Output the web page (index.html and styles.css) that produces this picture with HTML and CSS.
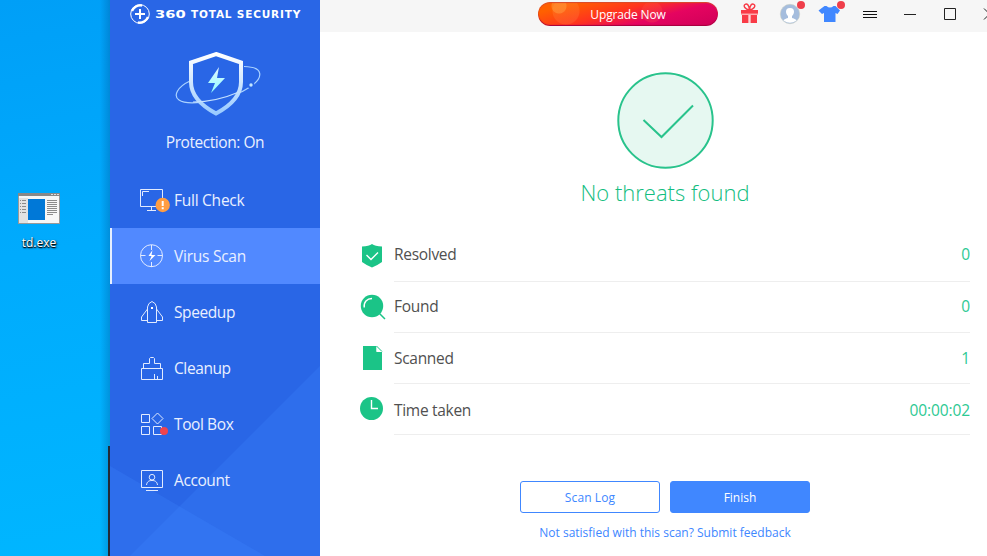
FILE: index.html
```html
<!DOCTYPE html>
<html lang="en">
<head>
<meta charset="utf-8">
<title>360 Total Security</title>
<link rel="stylesheet" href="styles.css">
</head>
<body>
<div class="screen">
  <section class="desktop">
    <div class="shortcut">
      <svg width="42" height="31" viewBox="0 0 42 31">
        <rect x=".5" y=".5" width="41" height="30" fill="#f7f7f7" stroke="#999"/>
        <rect width="42" height="3" fill="#888"/>
        <path d="M33 1.500h2M36 1.500h2M39 1.500h2" stroke="#ddd"/>
        <rect x="1" y="5" width="9" height="25" fill="#e2e2e2"/>
        <path d="M2 7.500h1m1 0h4M2 10.500h1m1 0h4M2 13.500h1m1 0h4M2 16.500h1m1 0h4M2 19.500h1m1 0h4M29 7.500h10M29 9.500h10M29 11.500h10M29 13.500h10M29 15.500h10M29 17.500h10M29 19.500h10M29 21.500h6" stroke="#8b8b8b"/>
        <rect x="10" y="6" width="17" height="21" fill="#0078d7"/>
      </svg>
      <span class="file-name">td.exe</span>
    </div>
    <div class="back-window"></div>
  </section>

  <aside class="sidebar">
    <svg class="beams" width="210" height="210" viewBox="0 0 210 210">
      <path d="M210 20V210H20Z" fill="#4187ff" fill-opacity=".25"/>
      <path d="M0 120L155 210H0Z" fill="#4187ff" fill-opacity=".25"/>
    </svg>
    <header class="brand">
      <svg width="20" height="20" viewBox="0 0 20 20" fill="none" stroke="#fff">
        <circle cx="10" cy="10" r="9.300" stroke-width="1"/>
        <path d="M2 7A9 9 0 0 1 12 1.500M18 13A9 9 0 0 1 8 18.500" stroke-width="2.300"/>
        <path d="M10 5v10M5 10h10" stroke-width="2"/>
      </svg>
      <span class="brand-name"><b class="brand-number">360</b><b class="brand-words">TOTAL SECURITY</b></span>
    </header>
    <div class="protection">
      <svg width="90" height="68" viewBox="0 0 90 68">
        <defs><linearGradient id="shield" x1="0" y1="0" x2="0" y2="1"><stop offset="0" stop-color="#fff"/><stop offset="1" stop-color="#9acbff"/></linearGradient>
        <linearGradient id="bolt" x1="0" y1="0" x2="0" y2="1"><stop offset="0" stop-color="#e3f5ff"/><stop offset="1" stop-color="#8fffff"/></linearGradient></defs>
        <path d="M17 32C4 38 0 47 6 51C16 58 60 50 77 38C90 29 92 18 71 17.500" fill="none" stroke="#abd3ff" stroke-width="1.200"/>
        <path d="M43 5L68 13.500V33C68 47 57 57 43 64.500C29 57 18 47 18 33V13.500Z" fill="#2966e6" stroke="url(#shield)" stroke-width="4"/>
        <path d="M20 53C35 53 52 49 66 43" fill="none" stroke="#c5e1ff" stroke-width="1.200"/>
        <path d="M46 18L35 34L42 34L38 44L52 29H44Z" fill="url(#bolt)"/>
        <circle cx="78" cy="36" r="3.500" fill="#2865e5"/><circle cx="78" cy="36" r="1.700" fill="#c3e6ff"/>
      </svg>
      <span class="protection-label">Protection: On</span>
    </div>
    <nav class="menu">
      <a class="item"><svg class="item-icon" viewBox="0 0 32 28"><path d="M.5 3.500h22v17H.5zM2.500 10V5.500h6.500M11.500 21v3.500M7 24.500h9"/><circle cx="22.700" cy="19" r="7.200" class="warning"/><path d="M22.700 15v5M22.700 21.300v2" class="warning-mark"/></svg><span class="long">Full Check</span></a>
      <a class="item active"><svg class="item-icon" viewBox="0 0 32 28"><circle cx="11.500" cy="13.700" r="11"/><path d="M11.500 3v5M11.500 20v5M.5 13.500h5M17.500 13.500h5"/><path d="M12.500 8L8.500 14h3l-2 5 6-6h-4z" class="solid"/></svg><span class="long">Virus Scan</span></a>
      <a class="item"><svg class="item-icon" viewBox="0 0 32 28"><path d="M7.500 24.500V9Q8 5 12 3.500Q16 5 16.500 9V24.500ZM7.500 11L1.500 19v3.500h6M16.500 11L22.500 19v3.500h-6"/><path d="M11 9h2v2h-2z" class="solid"/></svg><span>Speedup</span></a>
      <a class="item"><svg class="item-icon" viewBox="0 0 32 28"><path d="M1.500 14.500h21v11h-21zM3.500 14.500v-5h6v-5l1-1h3l1 1v5h6v5M14.500 20v5M17.500 22v3"/></svg><span>Cleanup</span></a>
      <a class="item"><svg class="item-icon" viewBox="0 0 32 28"><path d="M1.500 4.500h8v8h-8zM1.500 16.500h8v8h-8zM13.500 16.500h8v8h-8zM17.500 3l5.500 5.500-5.500 5.500L12 8.500z"/><circle cx="24" cy="21" r="4" class="alert"/></svg><span>Tool Box</span></a>
      <a class="item"><svg class="item-icon" viewBox="0 0 32 28"><path d="M1.500 4.500h21v17h-21zM6 24.500h12"/><circle cx="12" cy="11.200" r="2.800"/><path d="M6.500 19C7 15.500 9 14.500 12 14.500S17 15.500 17.500 19"/></svg><span>Account</span></a>
    </nav>
  </aside>

  <main class="content">
    <header class="titlebar">
      <button class="upgrade">Upgrade Now</button>
      <svg class="tools" width="269" height="32" viewBox="0 0 269 32">
        <g fill="#f93b47"><path d="M23 10h17v4H23zM24 15h6.500v8H24zM32.500 15H39v8h-6.500z"/><path d="M31.500 10C27 9 25 6 27 4.500S31 5 31.500 10C32 5 34 3 36 4.500S36 9 31.500 10" fill="none" stroke="#f93b47" stroke-width="1.500"/></g>
        <path d="M23 14.200h17" stroke="#ffa4a8" stroke-width="1.400"/><path d="M31.500 15v8" stroke="#ffd5d7" stroke-width="1.400"/>
        <circle cx="72" cy="14" r="9.700" fill="#a5bddd" stroke="#c8ccc5" stroke-width=".6"/>
        <path d="M72 8C66 8 68 15 70 16V18Q66 19 65.500 20.500Q72 25 78.500 20.500Q78 19 74 18V16C76 15 78 8 72 8Z" fill="#fff"/>
        <circle cx="83" cy="5" r="4" fill="#ef3e4a"/>
        <path d="M106.500 6L100.500 10.500L104 14L106 13V22H117.500V13L119.500 14L122 10.500L117.500 6H115.500Q112 9 108.500 6Z" fill="#4087ff"/>
        <circle cx="123" cy="5" r="4" fill="#ef3e4a"/>
        <path d="M145 11.500h14M145 14.500h14M145 17.500h14" stroke="#111"/>
        <path d="M186 14.500h12M226.500 8.500h11v11h-11zM266 8.500l11 11M277 8.500l-11 11" fill="none" stroke="#222"/>
      </svg>
    </header>
    <section class="result">
      <svg width="98" height="98" viewBox="0 0 98 98"><circle cx="48.500" cy="48.500" r="47.200" fill="#e6f8f1" stroke="#29c38c" stroke-width="2"/><path d="M26.500 48L44.500 65L76 33.500" fill="none" stroke="#29c38c" stroke-width="2"/></svg>
      <h1>No threats found</h1>
    </section>
    <section class="stats">
      <div class="stat"><svg viewBox="0 0 28 52"><path d="M2 16.500Q9 16 12 14Q15 16 22 16.500V32Q18 35 12 37.500Q6 35 2 32Z"/><path class="mark" d="M6.500 25L11 29.500L18 22.500"/></svg><div class="stat-row"><span>Resolved</span><b>0</b></div></div>
      <div class="stat"><svg viewBox="0 0 28 52"><circle cx="12" cy="24" r="11.200"/><path d="M19 31L25 37" stroke="#1bc487" stroke-width="1.500"/><path class="mark" d="M4.200 25.500C3.500 20 7 16.500 12 16.500"/></svg><div class="stat-row"><span>Found</span><b>0</b></div></div>
      <div class="stat"><svg viewBox="0 0 28 52"><path d="M3 13H16.500V19H22V37H3Z"/><path d="M16.500 13L22 18.500H16.500Z" fill="#fff"/><path d="M16.500 13L22 18.500" stroke="#1bc487"/></svg><div class="stat-row"><span>Scanned</span><b>1</b></div></div>
      <div class="stat"><svg viewBox="0 0 28 52"><circle cx="11.500" cy="24.500" r="11.500"/><path class="mark" d="M11.500 16V24.500H18"/></svg><div class="stat-row"><span>Time taken</span><b>00:00:02</b></div></div>
    </section>
    <footer class="actions">
      <div class="buttons"><button class="log">Scan Log</button><button class="finish">Finish</button></div>
      <a class="feedback">Not satisfied with this scan? Submit feedback</a>
    </footer>
  </main>
</div>
</body>
</html>
```
FILE: styles.css
```css
* { box-sizing: border-box; }
body { margin: 0; overflow: hidden; font-family: "Open Sans", "Noto Sans", sans-serif; }
button { padding: 0; border: 0; font: inherit; }
svg { display: block; flex: none; }
span, b, a { white-space: nowrap; }
.screen { display: flex; width: 987px; height: 556px; overflow: hidden; }

.desktop { position: relative; width: 110px; flex: none; padding: 194px 0 0 18px; background: linear-gradient(90deg, transparent 100px, rgba(0, 40, 100, .22)), linear-gradient(170deg, #009ff7, #00abfd 45%, #00b6ff); }
.shortcut { display: flex; flex-direction: column; align-items: center; width: 42px; }
.shortcut svg { margin-top: -1px; }
.file-name { margin-top: 10px; font-size: 12px; line-height: 17px; color: #fff; text-shadow: 1px 1px 2px #000, 0 1px 1px #000; }
.back-window { position: absolute; right: 0; bottom: 0; width: 2px; height: 110px; background: #222936; }

.sidebar { position: relative; width: 210px; flex: none; background: #2966e6; color: #e9f0ff; }
.beams { position: absolute; left: 0; top: 346px; }
.brand { display: flex; height: 28px; padding: 4px 0 0 20px; }
.brand-name { display: flex; margin-left: 5px; height: 20px; align-items: center; font: bold 10.5px/20px "DejaVu Sans", sans-serif; color: #fff; }
.brand-number { width: 36px; transform: scaleX(1.4); transform-origin: left; }
.brand-words { letter-spacing: .82px; }
.protection { display: flex; flex-direction: column; align-items: center; height: 144px; padding-top: 21px; }
.protection svg { margin-left: 5px; }
.protection-label { margin-top: 14px; font-size: 15.5px; line-height: 22px; letter-spacing: -.45px; }
.menu { position: relative; }
.item { display: flex; align-items: center; height: 56px; padding-left: 30px; font-size: 15.5px; letter-spacing: -.4px; }
.item span { padding-bottom: 1px; }
.item .long { letter-spacing: -.25px; }
.active { padding-left: 28px; border-left: 2px solid #e6efff; background: #5189ff; }
.item-icon { width: 32px; height: 28px; margin-right: 2px; fill: none; stroke: #e2ebff; stroke-width: 1; }
.solid { fill: #fff; stroke: none; }
.warning { fill: #ff9d42; stroke: none; }
.warning-mark { stroke: #fff; stroke-width: 2; }
.alert { fill: #ef444e; stroke: none; }

.content { width: 667px; flex: none; background: #fff; }
.titlebar { display: flex; height: 32px; padding-left: 218px; background: #f6f6f6; }
.upgrade { width: 180px; height: 24px; margin-top: 2px; border-radius: 12px; font-size: 12px; letter-spacing: -.15px; color: #fff; background: radial-gradient(circle at 21px 4px, rgba(255, 175, 80, .38) 7px, transparent 8px), radial-gradient(circle at 28px 9px, rgba(255, 150, 80, .22) 13px, transparent 14px), radial-gradient(circle at 114px 10px, rgba(255, 90, 70, .25) 10px, transparent 11px), linear-gradient(165deg, #ff6000 15%, #ff341e 43%, #e50460 66%, #cf0058); box-shadow: inset 0 -1px 1px #a5003d, inset 0 1px 1px #d94b2d; }
.result { display: flex; flex-direction: column; align-items: center; height: 198px; padding-top: 40px; }
.result svg { margin-left: 24px; }
h1 { margin: 4px 0 0 23px; font-size: 22px; line-height: 36px; font-weight: 300; color: #12bd80; white-space: nowrap; }
.stats { margin-left: 40px; width: 610px; height: 206px; }
.stat { display: flex; height: 51px; }
.stat > svg { width: 28px; height: 52px; margin-right: 6px; fill: #1bc487; }
.stat:first-child { height: 52px; }
.stat .mark { fill: none; stroke: #fff; stroke-width: 1.4; }
.stat-row { display: flex; flex: 1; justify-content: space-between; align-items: center; border-bottom: 1px solid #eee; font-size: 15.5px; letter-spacing: -.3px; color: #505050; }
.stat:nth-child(1) .stat-row { padding-bottom: 4px; }
.stat:nth-child(2) .stat-row { padding-bottom: 2px; }
.stat:nth-child(4) .stat-row { padding-top: 2px; }
.stat-row b { font-weight: 400; letter-spacing: -.1px; color: #2dc993; }
.actions { display: flex; flex-direction: column; align-items: center; padding: 45px 0 0 23px; }
.buttons { display: flex; gap: 10px; }
.buttons button { width: 140px; height: 32px; border: 1px solid #4087ff; border-radius: 3px; font-size: 12px; }
.buttons .log { background: #fff; color: #4087ff; letter-spacing: .1px; }
.buttons .finish { background: #4087ff; color: #fff; }
.feedback { margin-top: 10px; font-size: 12px; line-height: 20px; color: #4087ff; }
```
